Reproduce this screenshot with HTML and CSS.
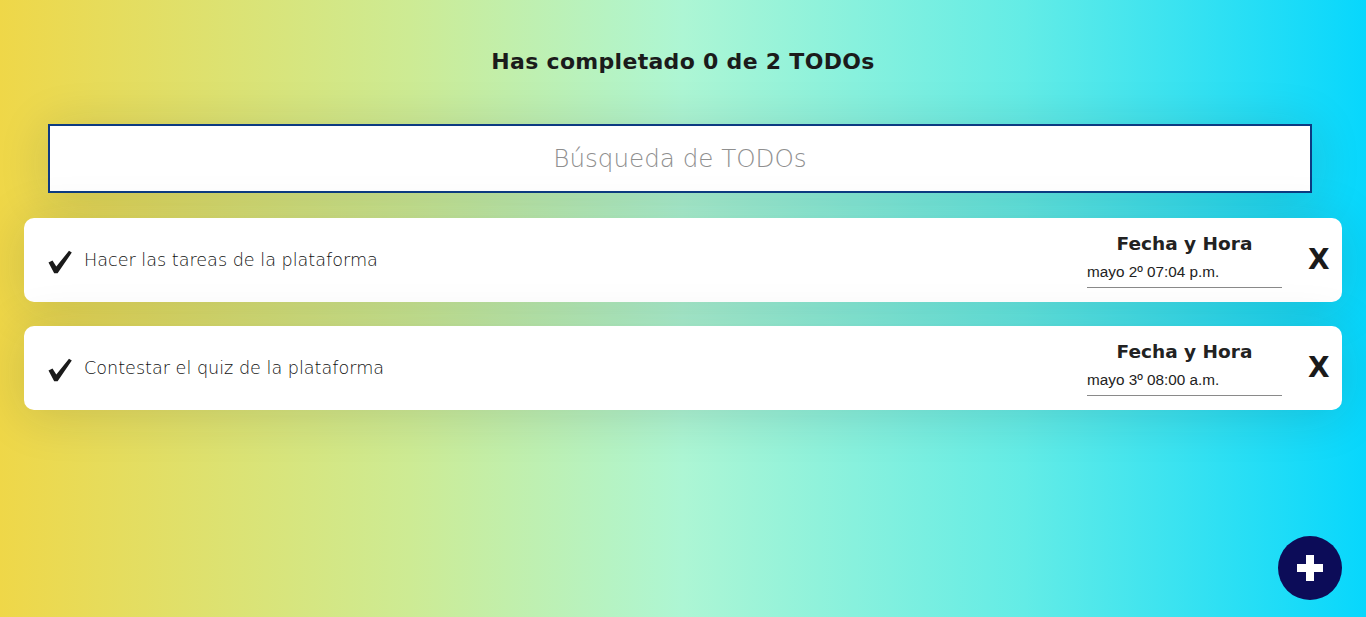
FILE: index.html
```html
<!DOCTYPE html>
<html lang="es">
<head>
<meta charset="utf-8">
<title>TODOs</title>
<link rel="stylesheet" href="styles.css">
</head>
<body>
<main class="app">
  <h1 class="counter">Has completado 0 de 2 TODOs</h1>
  <input class="search" type="text" placeholder="Búsqueda de TODOs">
  <ul class="list">
    <li class="item">
      <svg class="check" width="24" height="24" viewBox="0 0 24 24"><path d="M0.5 12.5 L4.5 10.5 L8.3 16.5 L21 0.8 L23.8 2.6 L9.6 23.2 L6.2 23.2 Z" fill="#1a1a1a"/></svg>
      <p class="text">Hacer las tareas de la plataforma</p>
      <div class="when">
        <span class="when-label">Fecha y Hora</span>
        <span class="when-value">mayo 2º 07:04 p.m.</span>
      </div>
      <span class="delete">X</span>
    </li>
    <li class="item">
      <svg class="check" width="24" height="24" viewBox="0 0 24 24"><path d="M0.5 12.5 L4.5 10.5 L8.3 16.5 L21 0.8 L23.8 2.6 L9.6 23.2 L6.2 23.2 Z" fill="#1a1a1a"/></svg>
      <p class="text">Contestar el quiz de la plataforma</p>
      <div class="when">
        <span class="when-label">Fecha y Hora</span>
        <span class="when-value">mayo 3º 08:00 a.m.</span>
      </div>
      <span class="delete">X</span>
    </li>
  </ul>
</main>
<button class="fab" aria-label="Agregar">
  <svg width="28" height="28" viewBox="0 0 28 28"><rect x="10" y="1" width="8" height="26" fill="#fff"/><rect x="1" y="10" width="26" height="8" fill="#fff"/></svg>
</button>
</body>
</html>
```

FILE: styles.css
```css
html, body {
  margin: 0;
  height: 100%;
}
body {
  background: linear-gradient(90deg, #efd748 0%, #cdeb94 30%, #adf6d4 50%, #63ece6 75%, #07d7fd 100%);
  font-family: "DejaVu Sans", "Open Sans", sans-serif;
  color: #1e1e1e;
  overflow: hidden;
}
.app {
  display: flex;
  flex-direction: column;
  padding: 0 24px;
}
.counter {
  margin: 0;
  height: 124px;
  display: flex;
  align-items: center;
  justify-content: center;
  font-size: 22px;
  font-weight: bold;
  letter-spacing: 0.3px;
  line-height: 1;
  color: #1b1b1b;
}
.search {
  margin: 0 0 25px 24px;
  width: 1264px;
  height: 69px;
  box-sizing: border-box;
  border: 2px solid #0d3b82;
  background: #fff;
  text-align: center;
  font-family: "DejaVu Sans", sans-serif;
  font-weight: 200;
  font-size: 24.6px;
  color: #333;
  outline: none;
  box-shadow: 0 5px 50px rgba(30, 30, 30, 0.15);
}
.search::placeholder {
  color: #8f8f8f;
}
.list {
  list-style: none;
  margin: 0;
  padding: 0;
  display: flex;
  flex-direction: column;
  gap: 24px;
}
.item {
  height: 84px;
  box-sizing: border-box;
  background: #fff;
  border-radius: 10px;
  display: flex;
  align-items: center;
  padding: 0 14px 0 24px;
  box-shadow: 0 5px 50px rgba(30, 30, 30, 0.15);
}
.check {
  flex: none;
  margin-right: 12px;
  margin-top: 4px;
}
.text {
  flex: 1;
  margin: 0;
  font-size: 17.6px;
  font-weight: 200;
  color: #111;
}
.when {
  width: 195px;
  align-self: stretch;
  display: flex;
  flex-direction: column;
  align-items: center;
  margin-right: 26px;
  padding-top: 15px;
  box-sizing: border-box;
}
.when-label {
  font-weight: bold;
  font-size: 18.5px;
  color: #222;
  line-height: 22px;
}
.when-value {
  align-self: stretch;
  margin-top: 7px;
  font-family: "Liberation Sans", Arial, sans-serif;
  font-size: 15.3px;
  color: #222;
  line-height: 20px;
  padding-bottom: 5px;
  border-bottom: 1px solid #8a8a8a;
}
.delete {
  font-weight: bold;
  font-size: 28px;
  color: #1a1a1a;
  width: 20px;
  text-align: center;
  line-height: 1;
}
.fab {
  position: fixed;
  right: 24px;
  bottom: 17px;
  width: 64px;
  height: 64px;
  border-radius: 50%;
  border: none;
  background: #0c0c58;
  display: flex;
  align-items: center;
  justify-content: center;
  padding: 0;
}
```
